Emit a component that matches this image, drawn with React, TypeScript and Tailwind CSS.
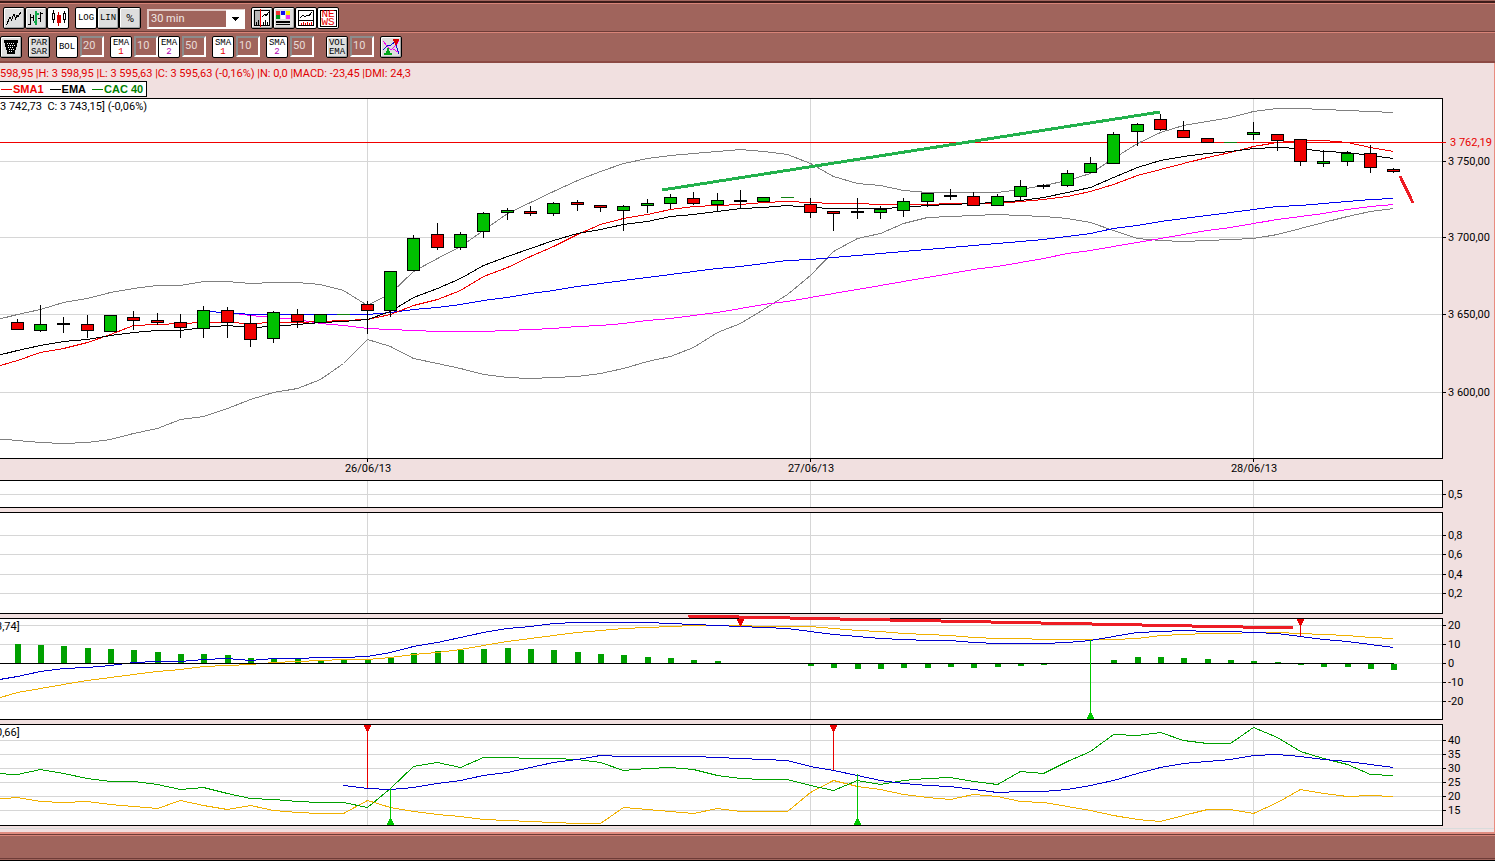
import { ReactNode } from 'react';
import clsx from 'clsx';

type CandleColor = 'up' | 'down' | 'doji' | 'flat';
// wick top, body top, body bottom, wick bottom, colour
type Candle = [number, number, number, number, CandleColor];

const CANDLES: Candle[] = [
  [319, 322, 329, 329, 'down'],
  [305, 324, 330, 331, 'up'],
  [317, 323, 324, 332, 'doji'],
  [315, 324, 330, 337, 'down'],
  [315, 315, 331, 331, 'up'],
  [311, 317, 320, 329, 'down'],
  [313, 320, 322, 324, 'down'],
  [314, 322, 327, 337, 'down'],
  [306, 310, 328, 337, 'up'],
  [307, 310, 322, 337, 'down'],
  [315, 323, 339, 346, 'down'],
  [311, 312, 338, 342, 'up'],
  [309, 314, 321, 327, 'down'],
  [314, 314, 322, 322, 'up'],
  [314, 314, 314, 314, 'flat'],
  [301, 304, 310, 333, 'down'],
  [271, 271, 310, 316, 'up'],
  [235, 238, 270, 270, 'up'],
  [223, 234, 247, 249, 'down'],
  [232, 234, 247, 249, 'up'],
  [212, 213, 231, 237, 'up'],
  [208, 210, 212, 219, 'up'],
  [206, 211, 213, 215, 'down'],
  [202, 203, 213, 215, 'up'],
  [200, 202, 204, 210, 'down'],
  [205, 205, 207, 211, 'down'],
  [205, 206, 210, 230, 'up'],
  [199, 203, 205, 212, 'up'],
  [194, 197, 203, 208, 'up'],
  [192, 198, 203, 204, 'down'],
  [193, 200, 204, 211, 'up'],
  [190, 200, 201, 208, 'doji'],
  [197, 197, 201, 201, 'up'],
  [197, 197, 197, 197, 'flat'],
  [198, 204, 212, 217, 'down'],
  [211, 211, 213, 230, 'down'],
  [198, 211, 212, 218, 'doji'],
  [206, 209, 212, 218, 'up'],
  [198, 201, 210, 216, 'up'],
  [193, 193, 201, 206, 'up'],
  [189, 195, 196, 199, 'doji'],
  [192, 196, 205, 205, 'down'],
  [194, 196, 205, 205, 'up'],
  [180, 186, 196, 199, 'up'],
  [184, 185, 186, 188, 'doji'],
  [170, 173, 185, 186, 'up'],
  [157, 163, 172, 172, 'up'],
  [132, 134, 163, 163, 'up'],
  [123, 124, 131, 145, 'up'],
  [114, 119, 129, 130, 'down'],
  [121, 130, 137, 137, 'down'],
  [138, 138, 142, 142, 'down'],
  [142, 142, 142, 142, 'flat'],
  [122, 132, 134, 139, 'up'],
  [134, 134, 140, 150, 'down'],
  [139, 139, 161, 165, 'down'],
  [150, 161, 163, 166, 'up'],
  [151, 153, 161, 165, 'up'],
  [145, 153, 167, 172, 'down'],
  [168, 169, 171, 172, 'down'],
];

const UPPER_BAND = [
  320, 314, 309, 302, 298, 292, 288, 285, 285, 281, 281, 283, 282, 282, 284, 290, 305, 293, 271, 258, 246,
  230, 213, 202, 191, 180, 171, 163, 158, 155, 153, 151, 149, 151, 154, 163, 176, 183, 185, 190, 192, 192,
  192, 192, 189, 185, 180, 173, 158, 143, 132, 125, 121, 117, 111, 108, 108, 109, 110, 111, 112,
];
const LOWER_BAND = [
  438, 440, 442, 443, 442, 439, 433, 428, 419, 416, 408, 399, 392, 388, 379, 363, 339, 346, 358, 363, 368,
  374, 377, 378, 377, 376, 373, 368, 361, 356, 347, 332, 323, 309, 294, 275, 251, 238, 233, 223, 217, 216,
  215, 214, 215, 216, 218, 222, 230, 238, 240, 241, 240, 239, 238, 234, 228, 222, 216, 211, 208,
];
const SMA_FAST = [
  367, 360, 352, 348, 342, 334, 325, 324, 323, 322, 322, 323, 322, 322, 321, 320, 319, 314, 305, 299, 290,
  276, 267, 256, 246, 234, 224, 218, 214, 209, 206, 205, 204, 202, 201, 202, 203, 203, 204, 204, 204, 203,
  203, 203, 201, 199, 196, 191, 184, 175, 169, 163, 157, 152, 146, 142, 140, 140, 142, 147, 151,
];
const EMA_FAST = [
  356, 350, 345, 341, 339, 335, 332, 330, 330, 327, 325, 327, 326, 324, 322, 321, 319, 311, 297, 288, 278,
  265, 256, 248, 240, 233, 229, 224, 221, 216, 214, 211, 208, 207, 205, 207, 208, 208, 208, 207, 205, 204,
  203, 202, 200, 197, 192, 187, 177, 167, 160, 156, 153, 151, 148, 147, 148, 151, 152, 155, 158,
];
// the slow averages only have data from the ninth candle on
const EMA_SLOW = [
  311, 312, 314, 314, 314, 314, 314, 314, 312, 309, 307, 304, 300, 297, 293, 290, 286, 283, 280, 277, 274,
  271, 268, 266, 263, 260, 259, 257, 255, 253, 251, 249, 247, 245, 243, 241, 239, 236, 233, 228, 225, 221,
  218, 215, 212, 209, 206, 205, 203, 201, 199, 198,
];
const SMA_SLOW = [
  311, 312, 315, 317, 319, 323, 325, 328, 329, 330, 331, 331, 331, 330, 329, 328, 326, 325, 323, 320, 318,
  315, 312, 308, 304, 301, 297, 293, 289, 285, 281, 277, 273, 269, 266, 262, 258, 253, 250, 246, 242, 238,
  234, 230, 227, 223, 219, 216, 213, 209, 206, 204,
];

const MACD_LINE = [
  680, 676, 671, 668, 667, 665, 662, 661, 661, 659, 658, 660, 658, 658, 657, 657, 656, 652, 646, 642, 637,
  632, 628, 626, 623, 622, 622, 622, 622, 623, 624, 625, 626, 627, 628, 631, 634, 636, 638, 639, 640, 640,
  642, 643, 643, 643, 642, 640, 636, 632, 631, 630, 631, 631, 632, 633, 636, 639, 641, 644, 647,
];
const MACD_SIGNAL = [
  699, 692, 688, 684, 680, 677, 674, 671, 669, 666, 665, 664, 662, 661, 660, 659, 659, 657, 654, 652, 649,
  645, 641, 638, 635, 632, 630, 628, 627, 626, 625, 625, 625, 626, 626, 626, 628, 630, 631, 633, 634, 635,
  637, 638, 638, 639, 639, 639, 639, 638, 635, 634, 633, 633, 632, 632, 633, 634, 635, 637, 638,
];
const MACD_HISTOGRAM = [
  19, 18, 17, 15, 14, 13, 11, 9, 9, 8, 5, 4, 4, 3, 3, 3, 5, 10, 12, 13, 14, 15, 14, 13, 11, 9, 8, 6, 5, 3, 2,
  0, 0, 0, -2, -4, -5, -5, -4, -4, -3, -4, -3, -2, -1, 0, 0, 3, 6, 6, 5, 4, 3, 2, 1, -1, -3, -3, -5, -6,
];

const DI_PLUS = [
  773, 774, 769, 773, 778, 781, 781, 784, 789, 787, 793, 798, 799, 801, 802, 802, 807, 788, 766, 762, 767,
  757, 757, 758, 758, 759, 762, 770, 768, 767, 769, 775, 778, 779, 779, 785, 790, 780, 784, 780, 778, 777,
  781, 784, 771, 773, 761, 751, 734, 735, 732, 740, 743, 743, 727, 737, 751, 758, 764, 774, 775,
];
const ADX = [
  785, 788, 789, 787, 783, 780, 775, 772, 767, 762, 759, 755, 756, 756, 756, 756, 757, 758, 759, 760, 766,
  770, 775, 780, 783, 785, 786, 789, 792, 791, 791, 789, 785, 780, 773, 767, 763, 761, 759, 755, 754, 756,
  759, 761, 764, 767,
];
const DI_MINUS = [
  799, 797, 801, 802, 801, 804, 806, 808, 800, 805, 809, 805, 810, 812, 813, 813, 800, 807, 811, 814, 816,
  819, 820, 821, 822, 823, 823, 807, 809, 811, 813, 808, 811, 811, 811, 792, 780, 786, 789, 794, 797, 799,
  794, 796, 801, 802, 806, 810, 815, 819, 821, 815, 809, 809, 813, 802, 789, 793, 796, 795, 796,
];

const DAY_LINES = [367, 810, 1253];
const DATES = [
  { label: '26/06/13', x: 367 },
  { label: '27/06/13', x: 810 },
  { label: '28/06/13', x: 1253 },
];
const PLOT_WIDTH = 1442;

const BODY_FILL: Record<CandleColor, string> = {
  up: '#00c000',
  down: '#f00000',
  doji: '#000000',
  flat: '#108010',
};

const candleX = (index: number) => Math.round(16.7 + index * 23.33);

interface LineProps {
  values: number[];
  color: string;
  start?: number;
}

function Line({ values, color, start = -1 }: LineProps) {
  const points = values.map((y, i) => `${candleX(i + start)},${y}`).join(' ');
  return (
    <polyline points={points} fill="none" stroke={color} strokeWidth="1" transform="translate(0.5 0.5)" />
  );
}

function CandleShape({ index, candle }: { index: number; candle: Candle }) {
  const [high, top, bottom, low, color] = candle;
  const x = candleX(index);
  const height = bottom - top + 1;
  if (color === 'flat') {
    return <rect x={x - 6} y={top} width="13" height="1" fill={BODY_FILL.flat} />;
  }
  return (
    <g>
      <rect x={x} y={high} width="1" height={low - high + 1} fill="#000" />
      <rect x={x - 6} y={top} width="13" height={height} fill="#000" />
      {height > 2 && (
        <rect x={x - 5} y={top + 1} width="11" height={height - 2} fill={BODY_FILL[color]} />
      )}
    </g>
  );
}

function SellSignal({ x, top, bottom }: { x: number; top: number; bottom: number }) {
  return (
    <g fill="#e80000">
      <rect x={x} y={top} width="1" height={bottom - top} />
      <path d={`M${x - 3} ${top}h7v2h-1v2h-1v2h-1v1h-1v-1h-1v-2h-1v-2h-1z`} />
    </g>
  );
}

function BuySignal({ x, top, bottom }: { x: number; top: number; bottom: number }) {
  return (
    <g fill="#00c800">
      <rect x={x} y={top} width="1" height={bottom - top} />
      <path d={`M${x - 3} ${bottom}h7v-2h-1v-2h-1v-2h-1v-1h-1v1h-1v2h-1v2h-1z`} />
    </g>
  );
}

interface Tick {
  y: number;
  label: string;
  alert?: boolean;
}

interface PanelProps {
  name: string;
  top: number;
  height: number;
  heightClass: string;
  ticks: Tick[];
  caption?: string;
  captionClass?: string;
  children?: ReactNode;
}

function Panel({ name, top, height, heightClass, ticks, caption, captionClass, children }: PanelProps) {
  return (
    <section aria-label={name} className={clsx('flex', heightClass)}>
      <div className="relative min-w-0 flex-1 border-y border-r border-black bg-white">
        <svg
          className="block h-full w-full overflow-visible"
          viewBox={`0 ${top + 1} ${PLOT_WIDTH} ${height - 2}`}
          preserveAspectRatio="none"
          shapeRendering="crispEdges"
        >
          {ticks.filter((t) => !t.alert).map((t) => (
            <rect key={t.y} x="0" y={t.y} width={PLOT_WIDTH} height="1" fill="#d6d6d6" />
          ))}
          {DAY_LINES.map((x) => (
            <rect key={x} x={x} y={top + 1} width="1" height={height - 2} fill="#d6d6d6" />
          ))}
          {children}
        </svg>
        {caption && (
          <span className={clsx('absolute top-px whitespace-pre leading-[14px]', captionClass)}>{caption}</span>
        )}
      </div>
      <svg
        className="block h-full w-[51px] shrink-0"
        viewBox={`0 ${top} 51 ${height}`}
        shapeRendering="crispEdges"
      >
        {ticks.map((t) => (
          <g key={t.y} fill={t.alert ? '#e80000' : '#000'}>
            <rect x="0" y={t.y} width="3" height="1" />
            <text x={t.alert ? 7 : 5} y={t.y + 4} fontSize="11">
              {t.label}
            </text>
          </g>
        ))}
      </svg>
    </section>
  );
}

interface ToolButtonProps {
  label: string;
  active?: boolean;
  children: ReactNode;
}

function ToolButton({ label, active, children }: ToolButtonProps) {
  return (
    <button
      type="button"
      aria-label={label}
      className={clsx(
        'flex h-[22px] w-[22px] shrink-0 flex-col items-center justify-center rounded-[2px] border border-black font-["Liberation_Mono",monospace] text-[9px] leading-[9px] text-black',
        active ? 'bg-white' : 'bg-[#dedede] shadow-[inset_1px_1px_0_#fff,inset_-1px_-1px_0_#a8a8a8]',
      )}
    >
      {children}
    </button>
  );
}

function Icon({ children }: { children: ReactNode }) {
  return (
    <svg width="20" height="20" viewBox="0 0 20 20" fill="none" shapeRendering="crispEdges">
      {children}
    </svg>
  );
}

function TwoLines({ first, second, color }: { first: string; second: string; color?: string }) {
  return (
    <span className="flex flex-col items-center pt-0.5">
      <span>{first}</span>
      <span className={color}>{second}</span>
    </span>
  );
}

function PeriodInput({ label, value }: { label: string; value: string }) {
  return (
    <input
      type="text"
      aria-label={label}
      defaultValue={value}
      className="ml-0.5 h-[21px] w-6 shrink-0 border-2 border-t-[#8c8c8c] border-r-white border-b-white border-l-[#8c8c8c] bg-[#a0645c] pb-0.5 pl-px text-[11px] text-[#e8dcd8] outline-none"
    />
  );
}

function PrimaryToolbar() {
  return (
    <div className="flex h-8 items-start gap-1.5 border-b border-[#6e3c38] bg-[#a0645c] pt-[7px] pl-[3px] shadow-[inset_0_1px_0_#a0645c,inset_0_3px_0_#3c1c1a,inset_0_4px_0_#d88478]">
      <div className="flex">
        <ToolButton label="Line chart">
          <Icon>
            <path d="M2.5 17l3.500-8 1.500 3 2.500-6 1.500 4.500 1.500-3 1 1.500 3-5" stroke="#000" />
          </Icon>
        </ToolButton>
        <ToolButton label="Bar chart">
          <Icon>
            <path d="M4.5 6v11M2 16.5h2M5 9.5h2M7.5 7v6M14.5 4v10M12 10.5h2M15 5.5h2" stroke="#000" />
            <path d="M10 3v14M8 14h2M11 6h2" stroke="#10a848" strokeWidth="2" />
          </Icon>
        </ToolButton>
        <ToolButton label="Candlestick chart" active>
          <Icon>
            <path d="M5.5 2v3M5.5 12v3M4.5 5.5h2v6h-2zM16.5 3v2M16.5 12v3M15.5 5.5h2v6h-2z" stroke="#000" />
            <path d="M10.5 4v14" stroke="#c00000" />
            <path d="M9 7h4v8H9z" fill="#d80000" />
          </Icon>
        </ToolButton>
      </div>
      <div className="flex">
        <ToolButton label="Logarithmic scale" active>LOG</ToolButton>
        <ToolButton label="Linear scale">LIN</ToolButton>
        <ToolButton label="Percent scale">
          <span className="font-['Roboto',sans-serif] text-[11px]">%</span>
        </ToolButton>
      </div>
      <div className="relative mt-0.5 h-5 w-[98px]">
        <select
          aria-label="Interval"
          defaultValue="30"
          className="block h-full w-full appearance-none border-2 border-t-[#e0c8c4] border-r-white border-b-white border-l-[#e0c8c4] bg-[#a0645c] pl-0.5 text-[11px] text-[#f0e8e4] outline-none"
        >
          <option value="30">30 min</option>
        </select>
        <span className="pointer-events-none absolute top-px right-px flex h-[18px] w-[18px] items-center justify-center bg-white">
          <svg width="7" height="4" shapeRendering="crispEdges">
            <path d="M0 0h7v1H6v1H5v1H4v1H3V3H2V2H1V1H0z" fill="#000" />
          </svg>
        </span>
      </div>
      <div className="flex">
        <ToolButton label="Crosshair">
          <Icon>
            <path d="M2 2h6v16H2z" fill="#b8b8b8" />
            <path d="M8 2h10v16H8z" fill="#fff" />
            <path d="M2.5 2.5h15v15h-15z" stroke="#000" />
            <path d="M10 9l3-3 1 2 3-4M4.5 14v3M6.5 12v5M11.5 14v3M13.5 12v5M15.5 14v3" stroke="#000" />
            <path d="M8.5 1v18" stroke="#f00000" />
          </Icon>
        </ToolButton>
        <ToolButton label="Colours">
          <Icon>
            <path d="M2 3h4v4H2z" fill="#f03030" />
            <path d="M7 3h4v4H7z" fill="#1010f0" />
            <path d="M12 3h4v4h-4z" fill="#f8f000" />
            <path d="M2 7h4v4H2z" fill="#009820" />
            <path d="M7 7h4v4H7z" fill="#fff" />
            <path d="M12 7h4v4h-4z" fill="#f030f0" />
            <path d="M2 13h14v2H2zM2 16h14v1H2z" fill="#000" />
          </Icon>
        </ToolButton>
        <ToolButton label="Indicators" active>
          <Icon>
            <path d="M2.5 2.5h15v15h-15zM3 12.5h14" stroke="#000" />
            <path d="M4 10l3-3 2 2 2-2 2 1 3-4" stroke="#000" />
            <path d="M5.5 15v2M7.5 14v3M9.5 15v2M11.5 14v3M13.5 15v2M15.5 14v3" stroke="#e80000" />
          </Icon>
        </ToolButton>
        <ToolButton label="News" active>
          <span className="flex h-[17px] w-[17px] flex-col items-center justify-center border border-black text-[11px] leading-[8px] text-[#e80000]">
            <span>NE</span>
            <span>WS</span>
          </span>
        </ToolButton>
      </div>
    </div>
  );
}

function Average({ name, color, slot, value }: { name: string; color: string; slot: string; value: string }) {
  return (
    <div className="flex">
      <ToolButton label={`${name} ${slot}`} active>
        <TwoLines first={name} second={slot} color={color} />
      </ToolButton>
      <PeriodInput label={`${name} ${slot} period`} value={value} />
    </div>
  );
}

function IndicatorToolbar() {
  return (
    <div className="flex h-[31px] items-start gap-1.5 border-t border-b-2 border-t-[#d88478] border-b-[#8c4a44] bg-[#a0645c] pt-[3px]">
      <ToolButton label="Clear drawings">
        <Icon>
          <path d="M3 3h14v3h-1v4h-1v3h-1v4H6v-4H5v-3H4V6H3z" fill="#000" />
          <path d="M6 6.5h8M7 8.5h7M7 10.5h6M8 12.5h5M8 14.5h4" stroke="#fff" strokeDasharray="1 1" />
        </Icon>
      </ToolButton>
      <ToolButton label="Parabolic SAR">
        <TwoLines first="PAR" second="SAR" />
      </ToolButton>
      <div className="flex">
        <ToolButton label="Bollinger bands" active>BOL</ToolButton>
        <PeriodInput label="Bollinger period" value="20" />
      </div>
      <div className="flex">
        <Average name="EMA" slot="1" color="text-[#e80000]" value="10" />
        <Average name="EMA" slot="2" color="text-[#b000b0]" value="50" />
      </div>
      <Average name="SMA" slot="1" color="text-[#e80000]" value="10" />
      <Average name="SMA" slot="2" color="text-[#b000b0]" value="50" />
      <div className="ml-1.5 flex">
        <ToolButton label="Volume EMA">
          <TwoLines first="VOL" second="EMA" />
        </ToolButton>
        <PeriodInput label="Volume EMA period" value="10" />
      </div>
      <ToolButton label="Signals">
        <Icon>
          <path d="M2 13l4-4 4-1 4-3 2 6 2 6" stroke="#1010d0" />
          <path d="M2 4l4 5 4 4 3-3 5-6M12 12l5 3" stroke="#f000f0" />
          <path d="M12 2h6v2h-1v2h-1v2h-2V6h-1V4h-1z" fill="#d80000" />
          <path d="M6 11h2v3h1v2h2v2H3v-2h2v-2h1z" fill="#00a818" />
        </Icon>
      </ToolButton>
    </div>
  );
}

function LegendItem({ label, line, text }: { label: string; line: string; text: string }) {
  return (
    <li className="flex shrink-0 items-center gap-px whitespace-nowrap">
      <span className={clsx('h-px w-[11px]', line)} />
      <span className={text}>{label}</span>
    </li>
  );
}

export default function App() {
  return (
    <div className="flex min-h-screen flex-col bg-[#f1e0e0] font-['Roboto',Arial,sans-serif] text-[11px] text-black">
      <header>
        <PrimaryToolbar />
        <IndicatorToolbar />
      </header>

      <main className="flex-1 overflow-hidden border-r border-[#e98c80]">
        <p className="h-[18px] whitespace-pre pt-1 leading-[14px] text-[#e00000]">
          598,95 |H: 3 598,95 |L: 3 595,63 |C: 3 595,63 (-0,16%) |N: 0,0 |MACD: -23,45 |DMI: 24,3
        </p>
        <ul className="mb-px flex h-4 w-[147px] items-center gap-1.5 border-y border-r border-black bg-white pl-px font-['Liberation_Sans',Arial,sans-serif] font-bold">
          <LegendItem label="SMA1" line="bg-[#f00000]" text="text-[#f00000]" />
          <LegendItem label="EMA" line="bg-black" text="text-black" />
          <LegendItem label="CAC 40" line="bg-[#008000]" text="text-[#008000]" />
        </ul>

        <Panel
          name="Price"
          top={98}
          height={361}
          heightClass="h-[361px]"
          caption="3 742,73  C: 3 743,15] (-0,06%)"
          captionClass="left-0"
          ticks={[
            { y: 142, label: '3 762,19', alert: true },
            { y: 161, label: '3 750,00' },
            { y: 237, label: '3 700,00' },
            { y: 314, label: '3 650,00' },
            { y: 392, label: '3 600,00' },
          ]}
        >
          <rect x="0" y="142" width={PLOT_WIDTH + 1} height="1" fill="#f00000" />
          <Line values={UPPER_BAND} color="#808080" />
          <Line values={LOWER_BAND} color="#808080" />
          <Line values={SMA_SLOW} color="#ff00ff" start={8} />
          <Line values={EMA_SLOW} color="#0000f0" start={8} />
          <Line values={SMA_FAST} color="#f00000" />
          <Line values={EMA_FAST} color="#000000" />
          {CANDLES.map((candle, i) => (
            <CandleShape key={i} index={i} candle={candle} />
          ))}
          <path d="M662 190L1160 112" stroke="#22b14c" strokeWidth="3" />
          <path d="M1400 176L1413 203" stroke="#ed1c24" strokeWidth="3" />
        </Panel>

        <svg className="block h-[21px] w-full" shapeRendering="crispEdges">
          {DATES.map((d) => (
            <g key={d.label}>
              <rect x={`${(d.x / 1494) * 100}%`} y="0" width="1" height="3" />
              <text x={`${((d.x + 1) / 1494) * 100}%`} y="13" fontSize="11" textAnchor="middle">
                {d.label}
              </text>
            </g>
          ))}
        </svg>

        <div className="flex flex-col gap-1">
          <Panel name="Volume" top={480} height={28} heightClass="h-7" ticks={[{ y: 494, label: '0,5' }]} />
          <Panel
            name="Volume average"
            top={512}
            height={102}
            heightClass="h-[102px]"
            ticks={[
              { y: 535, label: '0,8' },
              { y: 554, label: '0,6' },
              { y: 574, label: '0,4' },
              { y: 593, label: '0,2' },
            ]}
          />
          <Panel
            name="MACD"
            top={618}
            height={102}
            heightClass="h-[102px]"
            caption="3,74]"
            captionClass="-left-1"
            ticks={[
              { y: 625, label: '20' },
              { y: 644, label: '10' },
              { y: 663, label: '0' },
              { y: 682, label: '-10' },
              { y: 701, label: '-20' },
            ]}
          >
            {MACD_HISTOGRAM.map((v, i) => (
              <rect
                key={i}
                x={candleX(i) - 2}
                y={v > 0 ? 663 - v : 664}
                width="6"
                height={Math.abs(v)}
                fill="#00a000"
              />
            ))}
            <Line values={MACD_SIGNAL} color="#f0b000" />
            <Line values={MACD_LINE} color="#0000d0" />
            <rect x="0" y="663" width="1394" height="1" fill="#000" />
            <SellSignal x={740} top={619} bottom={627} />
            <SellSignal x={1300} top={619} bottom={636} />
            <BuySignal x={1090} top={640} bottom={719} />
            <path d="M688 616L1293 628" stroke="#ed1c24" strokeWidth="3" />
          </Panel>
          <Panel
            name="DMI"
            top={724}
            height={102}
            heightClass="h-[102px]"
            caption="0,66]"
            captionClass="-left-1"
            ticks={[
              { y: 740, label: '40' },
              { y: 754, label: '35' },
              { y: 768, label: '30' },
              { y: 782, label: '25' },
              { y: 796, label: '20' },
              { y: 810, label: '15' },
            ]}
          >
            <Line values={DI_MINUS} color="#f0b000" />
            <Line values={DI_PLUS} color="#00a000" />
            <Line values={ADX} color="#0000d0" start={14} />
            <SellSignal x={367} top={725} bottom={788} />
            <SellSignal x={833} top={725} bottom={770} />
            <BuySignal x={390} top={788} bottom={825} />
            <BuySignal x={857} top={774} bottom={825} />
          </Panel>
        </div>
        <div className="h-[3px] border-b border-[#d8dcdc]" />
      </main>

      <footer className="h-[29px] border-t-2 border-b border-t-[#e08c80] border-b-black bg-[#a0645c] shadow-[inset_0_1px_0_#6e3c38,inset_0_2px_0_#d88478,inset_0_-1px_0_#a0645c,inset_0_-2px_0_#6e3c38]" />
    </div>
  );
}
